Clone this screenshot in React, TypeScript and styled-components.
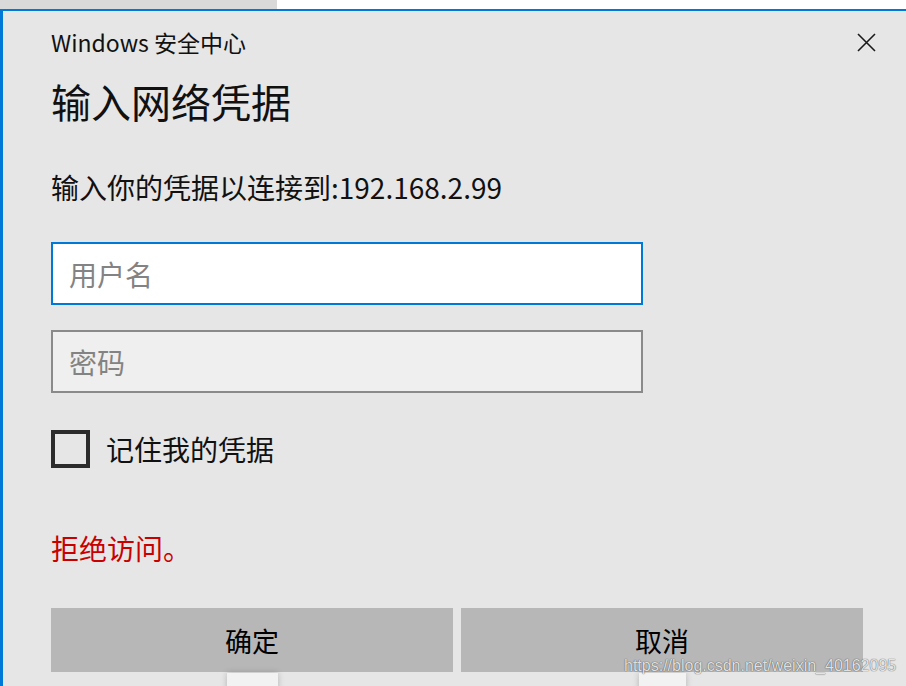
import React from "react";
import styled, { createGlobalStyle } from "styled-components";

const GlobalStyle = createGlobalStyle`
  html, body {
    margin: 0;
    padding: 0;
    background: #ffffff;
    width: 906px;
    height: 686px;
    overflow: hidden;
  }
  body {
    font-family: "Noto Sans CJK SC", "Noto Sans", sans-serif;
  }
`;

const Page = styled.div`
  display: flex;
  flex-direction: column;
  width: 906px;
  height: 686px;
`;

const TopStrip = styled.div`
  display: flex;
  height: 9px;
  flex-shrink: 0;
`;

const StripPart = styled.div<{ $grey?: boolean }>`
  flex: ${(p) => (p.$grey ? "0 0 277px" : "1")};
  background: ${(p) => (p.$grey ? "#d9d9d9" : "#ffffff")};
`;

const Dialog = styled.div`
  position: relative;
  flex: 1;
  display: flex;
  flex-direction: column;
  background: #e6e6e6;
  border-top: 2px solid #0078d7;
  border-left: 3px solid #0078d7;
  padding: 20px 0 0 48px;
  overflow: hidden;
`;

const Header = styled.div`
  display: flex;
  align-items: center;
  justify-content: space-between;
  padding-right: 30px;
`;

const Title = styled.div`
  font-size: 23px;
  line-height: 23px;
  color: #111;
`;

const CloseButton = styled.div`
  width: 19px;
  height: 19px;
  display: flex;
`;

const Heading = styled.h1`
  margin: 27px 0 0 0;
  font-size: 40px;
  line-height: 40px;
  font-weight: 400;
  color: #111;
`;

const Prompt = styled.div`
  margin-top: 53px;
  font-size: 28px;
  line-height: 27px;
  color: #111;
`;

const Field = styled.input<{ $focused?: boolean; $gap: number }>`
  box-sizing: border-box;
  margin: ${(p) => p.$gap}px 0 0 0;
  width: 592px;
  height: 63px;
  padding: 0 0 0 16px;
  border: 2px solid ${(p) => (p.$focused ? "#0078d7" : "#8a8a8a")};
  background: ${(p) => (p.$focused ? "#ffffff" : "#efefef")};
  font-family: "Noto Sans CJK SC", "Noto Sans", sans-serif;
  font-size: 28px;
  color: #111;
  outline: none;
  border-radius: 0;
  &::placeholder {
    color: #838383;
  }
`;

const CheckRow = styled.label`
  margin-top: 37px;
  display: flex;
  align-items: center;
  gap: 16px;
  font-size: 28px;
  line-height: 28px;
  color: #111;
`;

const CheckBox = styled.span`
  box-sizing: border-box;
  width: 39px;
  height: 38px;
  border: 4px solid #2b2b2b;
  background: transparent;
`;

const ErrorText = styled.div`
  margin-top: 67px;
  font-size: 28px;
  line-height: 27px;
  color: #c80000;
`;

const ButtonRow = styled.div`
  margin-top: 46px;
  display: flex;
  gap: 8px;
`;

const Button = styled.button`
  width: 402px;
  height: 64px;
  border: none;
  border-radius: 0;
  background: #b7b7b7;
  font-family: "Noto Sans CJK SC", "Noto Sans", sans-serif;
  font-size: 27px;
  color: #000;
  padding: 0;
`;

const Tab = styled.div<{ $left: number; $width: number }>`
  position: absolute;
  left: ${(p) => p.$left}px;
  top: 662px;
  width: ${(p) => p.$width}px;
  height: 20px;
  background: #f2f2f2;
  box-shadow: 0 0 6px rgba(0, 0, 0, 0.22);
`;

const Watermark = styled.div`
  position: absolute;
  left: 621px;
  top: 646px;
  font-family: "Liberation Sans", Arial, sans-serif;
  font-size: 16px;
  line-height: 18px;
  color: rgba(255, 255, 255, 0.85);
  text-shadow: 0 0 1px rgba(0, 0, 0, 0.55), 0 0 1px rgba(0, 0, 0, 0.4);
  white-space: nowrap;
`;

export default function App() {
  return (
    <>
      <GlobalStyle />
      <Page>
        <TopStrip>
          <StripPart $grey />
          <StripPart />
        </TopStrip>
        <Dialog>
          <Header>
            <Title>Windows 安全中心</Title>
            <CloseButton>
              <svg width="19" height="19" viewBox="0 0 19 19">
                <path d="M1 1 L18 18 M18 1 L1 18" stroke="#1a1a1a" strokeWidth="1.6" fill="none" />
              </svg>
            </CloseButton>
          </Header>
          <Heading>输入网络凭据</Heading>
          <Prompt>输入你的凭据以连接到:192.168.2.99</Prompt>
          <Field $focused $gap={41} placeholder="用户名" />
          <Field $gap={25} type="password" placeholder="密码" />
          <CheckRow>
            <CheckBox />
            记住我的凭据
          </CheckRow>
          <ErrorText>拒绝访问。</ErrorText>
          <ButtonRow>
            <Button>确定</Button>
            <Button>取消</Button>
          </ButtonRow>
          <Tab $left={224} $width={51} />
          <Tab $left={636} $width={47} />
          <Watermark>https://blog.csdn.net/weixin_40162095</Watermark>
        </Dialog>
      </Page>
    </>
  );
}
